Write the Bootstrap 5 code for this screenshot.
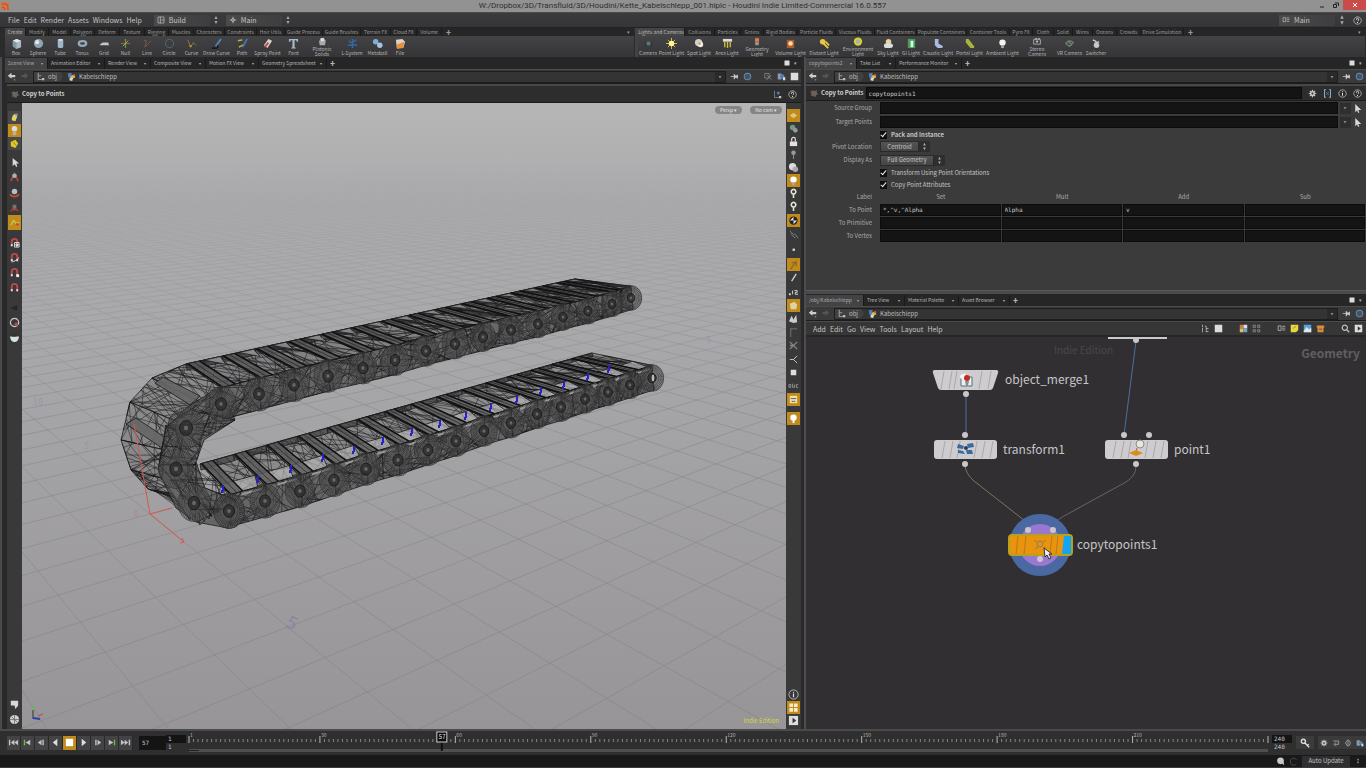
<!DOCTYPE html>
<html lang="en">
<head>
<meta charset="utf-8">
<meta name="viewport" content="width=device-width, initial-scale=1">
<title>Kette_Kabelschlepp_001.hiplc - Houdini Indie</title>
<link href="https://cdn.jsdelivr.net/npm/bootstrap@5.3.0/dist/css/bootstrap.min.css" rel="stylesheet">
<style>
:root{--panel:#39383a;--dark:#29292a;--line:#1d1d1e;--txt:#c4c4c5;--amber:#c08a1c}
body{font-family:"Noto Sans CJK SC","Open Sans",sans-serif;font-size:6px;line-height:8px;color:var(--txt);background:var(--dark);overflow:hidden}
button,select,input{font:inherit;color:inherit;border:0;background:none;padding:0;margin:0;border-radius:0;min-width:0}
button{line-height:inherit;display:inline-flex;align-items:center;justify-content:center}
svg{display:block;flex:none}
a{color:inherit;text-decoration:none}
select{appearance:none;outline:0}
.titlebar{height:12px;background:#929292;color:#2e2e2e;font:8px/12px Roboto,sans-serif}
.titlebar .cls{width:23px;height:10px;background:#cb4a4a;color:#fff}
.titlebar .wbtn{width:14px;height:10px}
.menubar{height:15px;background:linear-gradient(#3b3b3d,#353436);font-size:7px;line-height:14px;border-top:1px solid #4a4a4b;padding-left:8px}
.menubar a,.netmenu a{margin-right:4px}
.desk{width:56px;height:11px;background:linear-gradient(90deg,#4a4a4b,#3e3e40);padding-left:3px}
.desk select{font-size:7px;line-height:10px;height:11px;flex:1;width:30px}
.shelves{display:grid;grid-template-columns:635fr 731fr;background:#222;padding-top:1px;height:30px}
.shelf{border-left:5px solid #2b2b2c;border-right:1px solid #2b2b2c}
.shelf + .shelf{border-left:3px solid #434344}
.stabs{height:8px;background:#262627;color:#9b9b9c}
.stabs button{height:8px;font-size:5px;line-height:8px;border-right:1px solid #1a1a1b;white-space:nowrap;flex:none}
.stabs button.active{background:#454546;color:#bbb}
.stools{height:21px;background:linear-gradient(#434345,#353436)}
.stools button{flex:none;flex-direction:column;justify-content:flex-start;padding-top:2px;font-size:5px;line-height:5px;color:#b4b4b5;white-space:nowrap;height:21px}
.stools button svg{margin-bottom:1px}
.stools button.two svg{width:10px;height:9px;margin-bottom:0}
.stools button.two{padding-top:1px}
.workspace{display:grid;grid-template-columns:804fr 562fr;flex:1;min-height:0}
.pane{min-width:0;border-left:2px solid #4a4a4c;padding-left:5px;padding-right:3px;background:var(--dark)}
.pane .ptabs,.pane .pathbar{margin-left:-2px}
.pane .opbar{height:19px;padding-left:4px}
.rightcol{border-left:2px solid #4d4d4f;min-width:0}
.ptabs{height:12px;background:#262627;color:#b4b4b5}
.ptabs button{flex:none;height:11px;justify-content:space-between;padding:0 4px 0 3px;border-right:1px solid #19191a;white-space:nowrap;font-size:5px}
.ptabs button.active{background:#434345;color:#a8a8a9}
.ptabs button i{font-size:4px;font-style:normal}
.pathbar{height:15px;background:#3a3a3b;border-top:1px solid #4b4b4c;border-bottom:1px solid #1b1b1c;padding:0 2px}
.crumbs{flex:1;height:12px;background:#343435;border:1px solid #1d1d1e;color:#bdbdbe}
.crumbs .seg{background:#414142;height:10px;padding:0 6px 0 2px;clip-path:polygon(0 0,90% 0,100% 50%,90% 100%,0 100%)}
.crumbs a{gap:3px}
.crumbs .drop{width:10px;height:10px;background:#2a2a2b}
.opbar{height:17px;background:#2d2d2e;border-top:2px solid #484849;border-bottom:1px solid #1b1b1c;gap:2px}
.optitle{font-weight:700;color:#d0d0d1}
.tbar{width:15px;background:#39393a;padding-top:6px;padding-bottom:2px}
.tbar button{width:13px;height:13px;flex:none}
.tbar.lt{padding-top:8px}
.tbar.lt button{height:15px}
.tbar.lt .set button{height:13px;background:#48484a}
.tbar button.on,.tbar.lt .set button.on{background:var(--amber)}
.view{flex:1;min-width:0;overflow:hidden;background:#a3a2a4}
.view > svg{width:100%;height:100%}
.campill{top:3px;right:4px;font-size:5px}
.campill button{height:8px;border-radius:4px;background:#858587;color:#e2e2e3;padding:0 5px;line-height:8px}
.indie{right:7px;bottom:4px;color:#d6d63a}
.params{background:#3b3b3c}
.prow{display:grid;grid-template-columns:66px 1fr;column-gap:8px;height:14px;align-items:center;padding-right:3px}
.prow.h13{height:13px}.prow.h11{height:11px}.prow.h12{height:12px}
.prow > label:first-child,.prow > span:first-child{text-align:right;color:#a9a9aa}
.inp{background:#141415;height:12px;border:1px solid #0c0c0d;width:100%;font-family:"DejaVu Sans Mono",monospace;color:#c9c9ca;padding:0 2px;outline:0}
.pick{gap:2px}
.cbox{appearance:none;width:7px;height:8px;background:#0f0f10;position:relative}
.cbox:checked::after{content:"";position:absolute;left:2px;top:0;width:3px;height:6px;border:solid #eee;border-width:0 1px 1px 0;rotate:40deg}
.pmenu{background:linear-gradient(#545455,#464647);height:11px;border:1px solid #2a2a2b;text-align:center;padding:0 6px}
.updn{width:11px;height:11px;background:#2e2e2f}
.ptable{width:100%;table-layout:fixed;border-collapse:collapse;margin:0}
.ptable th{font-weight:400;color:#a9a9aa;padding:0;text-align:center;height:12px}
.ptable thead th{height:13px}
.ptable th:first-child{width:74px;text-align:right;padding-right:8px}
.ptable td{padding:0 1px 0 0;height:13px}
.ptable .inp{display:block}
.split{height:4px;background:#4a4a4b;border-top:1px solid #5a5a5b;flex:none}
.netmenu{height:16px;background:#363637;border-top:1px solid #4b4b4c;border-bottom:2px solid #262627;font-size:7px;line-height:12px;padding:0 3px 0 7px;flex:none}
.net{flex:1;min-height:0;background:#322f32;overflow:hidden}
.net > svg{width:100%;height:100%}
.net text{font-size:12px;fill:#c6c5c6}
.geo{right:6px;top:9px;font:700 12px/14px "Noto Sans CJK SC",sans-serif;color:#605e60}
.timeline{height:26px;background:#2f2f30;border-top:2px solid #4a4a4b;flex:none;padding-left:7px;padding-bottom:1px}
.play{margin-right:6px}
.play button{width:14px;height:14px;background:#434345;border-right:1px solid #29292a}
.play button.on{background:var(--amber)}
.numbox{background:#141415;height:14px;width:27px;font-family:"DejaVu Sans Mono",monospace;padding-left:3px;outline:0}
.rng{width:20px;font-family:"DejaVu Sans Mono",monospace}
.rng input{display:block;width:100%;height:8px;background:#141415;padding-left:2px}
.rng input + input{background:none}
.ruler{flex:1;min-width:0;height:22px;margin:0 4px 0 3px}
.ruler svg{width:100%;height:100%;overflow:visible}
.ruler text{font-size:5px;fill:#b5b5b6}
.statusbar{height:13px;background:#19191a;flex:none;border-bottom:1px solid #3a3a3b}
.statusbar select{background:#2f2f31;width:48px;height:11px;text-align:center}
.tools2 button{width:12px;height:13px;background:#3b3b3c}
</style>
</head>
<body>
<div class="vh-100 d-flex flex-column">
  <header class="titlebar d-flex align-items-center justify-content-between flex-shrink-0">
    <svg width="50" height="12" viewBox="0 0 50 12"><rect x="1" y="2" width="8" height="8" fill="#d9733f"/><path d="M2 4h3q3 0 3 3v3M2 7q3 0 3 3" stroke="#a8583a" fill="none"/></svg>
    <span>W:/Dropbox/3D/Transfluid/3D/Houdini/Kette_Kabelschlepp_001.hiplc - Houdini Indie Limited-Commercial 16.0.557</span>
    <div class="d-flex align-items-start h-100">
      <button class="wbtn" aria-label="Minimize"><svg width="6" height="6"><path d="M1 5h4" stroke="#222"/></svg></button>
      <button class="wbtn" aria-label="Restore"><svg width="6" height="6"><path d="M.5 2.500h3v3h-3zM2 1h3.500v3" stroke="#222" fill="none"/></svg></button>
      <button class="cls me-0" aria-label="Close"><svg width="6" height="6"><path d="M1 1l4 4M5 1L1 5" stroke="#fff"/></svg></button>
    </div>
  </header>

  <nav class="menubar d-flex align-items-center flex-shrink-0">
    <a href="#">File</a><a href="#">Edit</a><a href="#">Render</a><a href="#">Assets</a><a href="#">Windows</a><a href="#">Help</a>
    <div class="desk d-flex align-items-center gap-1 ms-2"><span data-ic="layout" data-s="8"></span><select aria-label="Desktop"><option>Build</option></select></div><span data-ic="updn" data-s="12"></span>
    <div class="desk d-flex align-items-center gap-1 ms-1"><span data-ic="target" data-s="8"></span><select aria-label="Radial menu"><option>Main</option></select></div><span data-ic="updn" data-s="12"></span>
    <div class="desk d-flex align-items-center gap-1 ms-auto"><span data-ic="frames" data-s="8"></span><select aria-label="Take"><option>Main</option></select></div><span data-ic="updn" data-s="14"></span>
    <button class="mx-1" aria-label="Help"><span data-ic="help" data-s="9"></span></button>
  </nav>

  <div class="shelves flex-shrink-0">
    <section class="shelf"><div class="stabs d-flex" id="tabsA"></div><div class="stools d-flex" id="toolsA"></div></section>
    <section class="shelf"><div class="stabs d-flex" id="tabsB"></div><div class="stools d-flex" id="toolsB"></div></section>
  </div>

  <main class="workspace">
    <section class="pane d-flex flex-column">
      <div class="ptabs d-flex align-items-center" data-tabs="Scene View:43,Animation Editor:57,Render View:46,Composite View:55,Motion FX View:53,Geometry Spreadsheet:68"></div>
      <div class="pathbar d-flex align-items-center gap-1">
        <button aria-label="Back"><span data-ic="back" data-s="9"></span></button><button aria-label="Forward"><span data-ic="fwd" data-s="9"></span></button>
        <div class="crumbs d-flex align-items-center"><a href="#" class="seg d-flex align-items-center"><span data-ic="obj" data-s="9"></span>obj</a><a href="#" class="d-flex align-items-center ms-1"><span data-ic="geo" data-s="9"></span>Kabelschlepp</a><button class="drop ms-auto" aria-label="Path list"><span data-ic="caret" data-s="6"></span></button></div>
        <button aria-label="Pin"><span data-ic="pin" data-s="9"></span></button><button aria-label="Link"><span data-ic="globe" data-s="9"></span></button>
        <button class="ms-2" aria-label="Ghost"><span data-ic="ghost" data-s="9"></span></button><button aria-label="Snapshot"><span data-ic="shot" data-s="9"></span></button><button aria-label="Layout"><span data-ic="white" data-s="9"></span></button>
      </div>
      <div class="opbar d-flex align-items-center pe-1"><span data-ic="copyop" data-s="9"></span><span class="optitle">Copy to Points</span><button class="ms-auto" aria-label="Handles"><span data-ic="handle" data-s="9"></span></button><button class="ms-1" aria-label="Help"><span data-ic="help" data-s="9"></span></button></div>
      <div class="d-flex flex-grow-1" style="min-height:0">
        <div class="tbar lt d-flex flex-column align-items-center" id="barL"></div>
        <div class="view position-relative">
          <svg id="scene" viewBox="22 103 764 626" preserveAspectRatio="xMinYMin slice"></svg>
          <div class="campill position-absolute d-flex gap-2"><button>Persp ▾</button><button>No cam ▾</button></div>
          <span class="indie position-absolute">Indie Edition</span>
        </div>
        <div class="tbar d-flex flex-column align-items-center" id="barR"></div>
      </div>
    </section>

    <div class="rightcol d-flex flex-column">
      <section class="params d-flex flex-column">
        <div class="ptabs d-flex align-items-center" data-tabs="copytopoints2:51,Take List:39,Performance Monitor:66"></div>
        <div class="pathbar d-flex align-items-center gap-1">
          <button aria-label="Back"><span data-ic="back" data-s="9"></span></button><button aria-label="Forward"><span data-ic="fwd" data-s="9"></span></button>
          <div class="crumbs d-flex align-items-center"><a href="#" class="seg d-flex align-items-center"><span data-ic="obj" data-s="9"></span>obj</a><a href="#" class="d-flex align-items-center ms-1"><span data-ic="geo" data-s="9"></span>Kabelschlepp</a><button class="drop ms-auto" aria-label="Path list"><span data-ic="caret" data-s="6"></span></button></div>
          <button aria-label="Pin"><span data-ic="pin" data-s="9"></span></button><button aria-label="Link"><span data-ic="globe" data-s="9"></span></button>
        </div>
        <div class="opbar d-flex align-items-center ps-1 pe-1"><span data-ic="copyop" data-s="9"></span><label for="opname" class="optitle">Copy to Points</label><input id="opname" class="inp flex-grow-1 w-auto" value="copytopoints1"><button class="ms-1" aria-label="Settings"><span data-ic="gear" data-s="9"></span></button><button class="ms-1" aria-label="Brackets"><span data-ic="brk" data-s="9"></span></button><button class="ms-1" aria-label="Info"><span data-ic="info" data-s="9"></span></button><button class="ms-1" aria-label="Help"><span data-ic="help" data-s="9"></span></button></div>
        <div class="prow"><label for="sg">Source Group</label><div class="d-flex align-items-center pick"><input id="sg" class="inp"><button class="updn" aria-label="Groups"><span data-ic="caret" data-s="6"></span></button><button class="updn bg-transparent" aria-label="Pick"><span data-ic="cursor" data-s="9"></span></button></div></div>
        <div class="prow"><label for="tp">Target Points</label><div class="d-flex align-items-center pick"><input id="tp" class="inp"><button class="updn" aria-label="Groups"><span data-ic="caret" data-s="6"></span></button><button class="updn bg-transparent" aria-label="Pick"><span data-ic="cursor" data-s="9"></span></button></div></div>
        <div class="prow h11"><span></span><div class="d-flex align-items-center gap-1"><input type="checkbox" class="cbox" id="pk" checked><label for="pk" class="fw-bold">Pack and Instance</label></div></div>
        <div class="prow h13"><label for="pl">Pivot Location</label><div class="d-flex"><select id="pl" class="pmenu"><option>Centroid</option></select><span class="updn" data-ic="updn" data-s="11"></span></div></div>
        <div class="prow"><label for="da">Display As</label><div class="d-flex"><select id="da" class="pmenu"><option>Full Geometry</option></select><span class="updn" data-ic="updn" data-s="11"></span></div></div>
        <div class="prow h12"><span></span><div class="d-flex align-items-center gap-1"><input type="checkbox" class="cbox" id="tu" checked><label for="tu">Transform Using Point Orientations</label></div></div>
        <div class="prow h11"><span></span><div class="d-flex align-items-center gap-1"><input type="checkbox" class="cbox" id="ca" checked><label for="ca">Copy Point Attributes</label></div></div>
        <table class="ptable">
          <thead><tr><th>Label</th><th>Set</th><th>Mult</th><th>Add</th><th>Sub</th></tr></thead>
          <tbody>
            <tr><th>To Point</th><td><input class="inp" aria-label="Point set" value="*,^v,^Alpha"></td><td><input class="inp" aria-label="Point mult" value="Alpha"></td><td><input class="inp" aria-label="Point add" value="v"></td><td><input class="inp" aria-label="Point sub"></td></tr>
            <tr><th>To Primitive</th><td><input class="inp" aria-label="Primitive set"></td><td><input class="inp" aria-label="Primitive mult"></td><td><input class="inp" aria-label="Primitive add"></td><td><input class="inp" aria-label="Primitive sub"></td></tr>
            <tr><th>To Vertex</th><td><input class="inp" aria-label="Vertex set"></td><td><input class="inp" aria-label="Vertex mult"></td><td><input class="inp" aria-label="Vertex add"></td><td><input class="inp" aria-label="Vertex sub"></td></tr>
          </tbody>
        </table>
        <div class="pb-5"></div>
      </section>
      <div class="split"></div>
      <section class="d-flex flex-column flex-grow-1" style="min-height:0">
        <div class="ptabs d-flex align-items-center flex-shrink-0" data-tabs="/obj/Kabelschlepp:58,Tree View:41,Material Palette:54,Asset Browser:51"></div>
        <div class="pathbar d-flex align-items-center gap-1 flex-shrink-0">
          <button aria-label="Back"><span data-ic="back" data-s="9"></span></button><button aria-label="Forward"><span data-ic="fwd" data-s="9"></span></button>
          <div class="crumbs d-flex align-items-center"><a href="#" class="seg d-flex align-items-center"><span data-ic="obj" data-s="9"></span>obj</a><a href="#" class="d-flex align-items-center ms-1"><span data-ic="geo" data-s="9"></span>Kabelschlepp</a><button class="drop ms-auto" aria-label="Path list"><span data-ic="caret" data-s="6"></span></button></div>
          <button aria-label="Pin"><span data-ic="pin" data-s="9"></span></button><button aria-label="Link"><span data-ic="globe" data-s="9"></span></button>
        </div>
        <nav class="netmenu d-flex align-items-center">
          <a href="#">Add</a><a href="#">Edit</a><a href="#">Go</a><a href="#">View</a><a href="#">Tools</a><a href="#">Layout</a><a href="#">Help</a>
          <div class="ms-auto d-flex gap-3"><div class="d-flex gap-1"><button aria-label="Tree"><span data-ic="tree" data-s="9"></span></button><button aria-label="List"><span data-ic="white" data-s="9"></span></button></div>
          <div class="d-flex gap-1"><button aria-label="Colors"><span data-ic="palette" data-s="9"></span></button><button aria-label="Grid"><span data-ic="cells" data-s="9"></span></button></div>
          <div class="d-flex gap-1"><button aria-label="Frames"><span data-ic="frames" data-s="9"></span></button><button aria-label="Sticky note"><span data-ic="note" data-s="9"></span></button><button aria-label="Image"><span data-ic="image" data-s="9"></span></button><button aria-label="Box"><span data-ic="crate" data-s="9"></span></button></div>
          <div class="d-flex gap-1"><button aria-label="Search"><span data-ic="search" data-s="9"></span></button><button aria-label="Display"><span data-ic="disp" data-s="9"></span></button></div></div>
        </nav>
        <div class="net position-relative">
          <svg>
            <defs><g id="stripes" stroke="#a9a7a9" stroke-width="1"><path d="M11 1l-3 17M19 1l-3 17M26 1l-3 17M43 1l-3 17M51 1l-3 17M59 1l-3 17"/></g></defs>
            <text x="248" y="17" style="font-size:10px;fill:#4a474a">Indie Edition</text>
            <g fill="none" stroke="#4c6f98"><path d="M330 4L318 98M160 58V98"/></g>
            <path d="M159 129Q160 137 168 144L214 180Q222 186 222 193" fill="none" stroke="#747a60"/>
            <path d="M330 129Q330 139 320 145L258 179Q247 185 247 193" fill="none" stroke="#6b6560"/>
            <path d="M302 0h59v2h-59z" fill="#cbc9cb"/>
            <path d="M129 33h61q3 0 2 3l-5 15q-1 2-3 2h-49q-2 0-3-2l-5-15q-1-3 2-3z" fill="#cfcccf"/>
            <path d="M138 34l-3 18M146 34l-3 18M151 34l-3 18M176 34l-3 18M185 34l-3 18" stroke="#a9a7a9"/>
            <path d="M155 40h11v9h-11z" fill="#eee" stroke="#4d7280"/><path d="M154 41q0-5 6-4l-2 6z" fill="#f4f4f4"/><circle cx="161" cy="41" r="3" fill="#c32a22"/><path d="M159 44h4l-1 5h-2z" fill="#7f8f94"/>
            <rect x="128" y="103" width="63" height="19" rx="3" fill="#cfcccf"/><use href="#stripes" x="128" y="103"/>
            <path d="M152 107l6 2-1 3-6-1zM161 107l6-1 1 4-6 1zM152 113l5 1 2 3-7-1zM160 113l6 0 1 4-6 0z" fill="#3c6a9c"/><circle cx="160" cy="111" r="2" fill="#26405c"/>
            <rect x="299" y="103" width="63" height="19" rx="3" fill="#cfcccf"/><use href="#stripes" x="299" y="103"/>
            <circle cx="334" cy="107" r="4" fill="#e7e7df" stroke="#8d8d86"/><path d="M331 111l-1 4" stroke="#8a7430"/><path d="M323 116l7-3 7 3-7 3z" fill="#e08a1c"/>
            <circle cx="234" cy="208" r="31" fill="#4a69a3"/><circle cx="234" cy="208" r="21" fill="#9a78cf"/>
            <g fill="#c9c7c9"><circle cx="330" cy="3" r="3"/><circle cx="160" cy="57" r="3"/><circle cx="159" cy="98" r="3"/><circle cx="159" cy="127" r="3"/><circle cx="318" cy="98" r="3"/><circle cx="343" cy="98" r="3"/><circle cx="330" cy="127" r="3"/><circle cx="222" cy="193" r="3"/><circle cx="247" cy="193" r="3"/><circle cx="234" cy="222" r="3"/></g>
            <rect x="203" y="198" width="63" height="20" rx="3" fill="#e8940f" stroke="#b8a21c" stroke-width="2"/>
            <path d="M258 199h7v18h-9z" fill="#12a5f2"/><path d="M212 199l-2 18M220 199l-2 18M246 199l-2 18M252 199l-2 18" stroke="#b87a1c"/>
            <g fill="#cf9640" stroke="#a87c30"><circle cx="234" cy="207" r="3"/><path d="M228 203l3 2M240 203l-3 2M229 212l3-2M240 211l-3-1"/></g>
            <path d="M238 211l1 9 2-2 2 4 2-1-2-4h3z" fill="#eee" stroke="#333"/>
            <text x="199" y="47">object_merge1</text><text x="197" y="117">transform1</text><text x="368" y="117">point1</text><text x="271" y="212">copytopoints1</text>
          </svg>
          <span class="geo position-absolute">Geometry</span>
        </div>
      </section>
    </div>
  </main>

  <footer class="timeline d-flex align-items-center">
    <div class="play d-flex" id="play"></div>
    <input class="numbox" aria-label="Current frame" value="57">
    <div class="rng"><input aria-label="Range start" value="1"><input aria-label="Global start" value="1"></div>
    <div class="ruler"><svg id="ruler"></svg></div>
    <div class="rng"><input aria-label="Range end" value="240"><input aria-label="Global end" value="240"></div>
    <div class="tools2 d-flex align-items-center ms-1"><button class="me-1 px-1" style="width:auto" aria-label="Key"><span data-ic="key" data-s="10"></span></button><button aria-label="Settings"><span data-ic="gear" data-s="8"></span></button><button aria-label="Loop"><span data-ic="loop" data-s="8"></span></button><button aria-label="Audio"><span data-ic="audio" data-s="8"></span></button><button aria-label="Realtime"><span data-ic="shot" data-s="8"></span></button></div>
  </footer>
  <div class="statusbar d-flex align-items-center justify-content-end gap-1 pe-1"><button aria-label="Chat"><span data-ic="chat" data-s="9"></span></button><button aria-label="Refresh"><span data-ic="refresh" data-s="9"></span></button><select aria-label="Update mode"><option>Auto Update</option></select><span data-ic="updn" data-s="8"></span></div>
</div>
<script src="https://cdn.jsdelivr.net/npm/bootstrap@5.3.0/dist/js/bootstrap.bundle.min.js"></script>
<script>
// Icon drawings, each on a 12 x 12 grid
const P = (d, c = '#c4c4c5', w = 1) => `<path d="${d}" fill="none" stroke="${c}" stroke-width="${w}"/>`;
const F = (d, c = '#c4c4c5') => `<path d="${d}" fill="${c}"/>`;
const C = (x, y, r, c = '#c4c4c5') => `<circle cx="${x}" cy="${y}" r="${r}" fill="${c}"/>`;
const magnet = P('M3 9V5a3 3 0 0 1 6 0v4', '#c0484a', 2) + F('M2 8h2v2H2zM8 8h2v2H8z', '#eee');
const bulb = c => C(6, 5, 3.5, c) + F('M4.500 8h3v3h-3z', '#aaa');
const I = {
  layout: P('M1.500 1.500h9v9h-9zM5 1v10M5 6h6'), target: P('M6 1v10M1 6h10') + P('M6 3.500a2.500 2.500 0 1 0 .1 0'),
  frames: P('M1.500 2.500h4v6h-4zM7 3h4M7 5.500h4M7 8h4'), updn: F('M4.500 5L6 2l1.500 3zM4.500 7L6 10l1.500-3z', '#aaa'),
  help: P('M6 1a5 5 0 1 0 .1 0') + P('M4.500 5q0-2 1.500-2t1.500 1.500T6 7M6 8v1.500', '#ddd', 1.3), info: P('M6 1a5 5 0 1 0 .1 0') + P('M6 5v4M6 3v1', '#ddd', 1.3),
  back: F('M1 5l5-4v3h5v3H6v2z', '#ccc') + F('M9 10h2v1H9z'), fwd: F('M11 5L6 1v3H2v3h4v2z', '#555'), caret: F('M3 4h6L6 9z', '#888'),
  obj: P('M3 1v9h8M3 5h4', '#999', 1.5) + F('M8 8h3v3H8z', '#bbb'), geo: F('M1 2l5-1v6l-4 1z', '#4d7fc0') + F('M5 5l5-2 1 4-5 3z', '#e3b63c') + F('M4 7l4 1-1 4-4-1z', '#d9d9d9') + F('M8 3h3v2H8z', '#c94b3a'),
  pin: F('M1 5.500h4v-3h1l1 2h2v-1h1.500v5H9v-1H7l-1 2H5v-3H1z', '#ccc'), globe: C(6, 6, 5, '#7089a4') + C(6, 6, 3.8, '#3d5674'),
  ghost: P('M1 2h6v6H1zM4 4l6 6M10 4L3 11', '#888'), shot: F('M1 2h5v8H1z', '#8c9bb0') + C(7, 6, 3, '#4d7eb8') + F('M8 7h3v4H8z', '#ddd'), white: F('M1 1h10v10H1z', '#dcdcdc'),
  copyop: F('M3 1l3 2 3-2 0 4 2 2-3 1-1 3-3-2-3 0 1-3-2-3h3z', '#6d625c'), handle: P('M2 1v9h6', '#88a') + C(7, 4, 2, '#4d7eb8') + F('M8 8h3v3H8z'),
  gear: P('M6 1v10M1 6h10M2.500 2.500l7 7M9.500 2.500l-7 7', '#c4c4c5', 1.6) + C(6, 6, 3.4) + C(6, 6, 1.3, '#333'), brk: P('M4 1H2v10h2M8 1h2v10H8', '#8fa6bd', 1.4) + P('M4 4l4 4M8 4L4 8', '#5d81aa'),
  cursor: F('M3 0v11l2.500-2.500L7 12l1.500-1L7 8h4z', '#d8d8d8'), tree: P('M2 1v3M2 5v6M5 3h2v8M7 6h3M7 10h3'), palette: F('M1 1h5v5H1z', '#d0774b') + F('M6 1h5v5H6z', '#ddd') + F('M1 6h5v5H1z', '#d8c25a') + F('M6 6h5v5H6z', '#71a0cc'),
  cells: P('M1.500 1.500h3v3h-3zM7.500 1.500h3v3h-3zM1.500 7.500h3v3h-3zM7.500 7.500h3v3h-3z', '#999'), note: F('M1 1h10v7l-3 3H1z', '#e6d940') + P('M4 6l4-3', '#775'), image: F('M1 1h10v10H1z', '#58a4d6') + F('M1 9l4-5 3 3 3-2v6H1z', '#dfe6ea'), crate: F('M1 2h10v3H1zM2 5h8v6H2z', '#d98e35') + F('M4 6h4v2H4z', '#865'),
  search: P('M5 1.500a3.500 3.500 0 1 0 .1 0M7.500 7.500L11 11', '#ccc', 1.5), disp: F('M1 1h10v10H1z', '#ddd') + F('M5 3l4 3-4 3z', '#333'), key: P('M4 1.500a2.500 2.500 0 1 0 .1 0M6 6l5 5M9 9l1.500-1.500', '#ddd', 1.7),
  loop: P('M2 3h8v5H4M6 5L3 8l3 3'), audio: P('M6 1L2 6l4 5M8 2q3 4 0 8M6 1v10'), chat: C(6, 5, 4.500, '#c9c9ca') + F('M7 8l4 3-1-5z'), refresh: P('M10 4a4.500 4.500 0 0 0-8 0v4M2 8a4.500 4.500 0 0 0 8 1', '#555'),
  // shelf tools
  box: F('M2 3l4-2 5 2v7l-5 2-4-3z', '#a9b9c0') + F('M2 3l4 2 5-2-5-2z', '#dfe9ec') + F('M2 3l4 2v7l-4-3z', '#8298a2'), sphere: C(6, 6, 5, '#8fa6b0') + C(4.500, 4.500, 2.300, '#dfe8ea'), tube: F('M3 2q3-2 6 0v8q-3 2-6 0z', '#9fb6c8') + F('M3 2q3 2 6 0-3-2-6 0', '#e3ecf0'),
  torus: `<ellipse cx="6" cy="6" rx="4" ry="2.500" fill="none" stroke="#92aabb" stroke-width="2.500"/>`, gridp: F('M1 7l3-2h6l1 3H1z', '#c2c6c8'), nul: P('M6 1v10', '#4c9a4a', 1.5) + P('M1 6h10', '#c2553e') + P('M3 9l6-6', '#c9a23a'), linei: P('M2 3h3L3 10l7-7', '#7d5a52'), circ: P('M6 1.500a4.500 4.500 0 1 0 .1 0', '#5b7080'),
  curve: P('M2 2l3 8 3-5 3 3', '#9a7b3a') + C(5, 9, 1.2, '#c9a23a'), draw: P('M1 11h5q2 0 1-3', '#111', 1.5) + P('M5 9l6-8', '#4a85bb', 2), path: P('M1 3l5-1M2 10l6-3', '#c9b33a', 1.5) + P('M6 10l5-9', '#3f78b5', 2), spray: F('M2 8l5-7 4 2-5 8z', '#d9d2d0') + P('M3 10l4-5', '#c0483e', 2), fonti: F('M1 1h10v3H9.500L9 2.500H7.200V10l1.300.5v1h-5v-1L4.800 10V2.500H3L2.500 4H1z', '#a6bac6'),
  plat: F('M2 6l2-4 4-1 3 4-1 6H3z', '#a9a9aa') + F('M4 2l4-1 1 4-4 1z', '#ddd'), lsys: P('M6 11V5M6 6L2 3M6 5l4-3M6 7l5 1M6 8L1 8M6 4V1', '#2f6aa8', 1.600), meta: C(4, 4, 3, '#84abd6') + C(8.500, 8, 3, '#a5c3e3'), file: F('M1 2l7-1 3 3-2 7H2z', '#ddd3c8') + F('M2 7l8-3-1 7-7 1z', '#e5923c'),
  cam: F('M2 4h8v5H2z', '#2e3438') + C(6, 6, 2.500, '#55757a'), sun: P('M6 0v12M0 6h12M2 2l8 8M10 2l-8 8', '#d6c54c') + C(6, 6, 3, '#fff3a0'), spot: C(5, 5, 4, '#cfcfcf') + C(7, 7, 3, '#eee') + C(6, 6, 1.500, '#c9a23a'), area: F('M1 1h10v3H1z', '#ddd') + P('M3 4v6M6 4v7M9 4v6', '#d6b93c', 1.500),
  geol: C(6, 4, 3, '#d87a4a') + F('M3 7h6l-1 4H4z', '#9a9a88'), vol: F('M2 2h8v9H2z', '#b45a32') + C(6, 6, 2.500, '#ffe9a0'), dist: C(4, 4, 3, '#e8c93c') + P('M5 6l5 5M7 4l4 4', '#e8c93c', 2), env: C(6, 6, 5.500, '#e0d035') + C(6, 6, 3, '#9fb6a0'), sky: C(6, 4, 3, '#e6d58a') + F('M1 9q0-4 4-3 5-1 6 2 0 3-3 3H3q-2 0-2-2', '#d8dde2'), gi: F('M2 1h8v10H2z', '#4e9a58') + F('M5 3h3v7H5z', '#cfe'), caus: F('M2 1h4v5l5 3-1 2H5L2 8z', '#a9b9e0'), portal: F('M2 1h3l6 8v2H7L2 5z', '#a9b33a'),
  bulbw: bulb('#f1f4ef'), stereo: P('M1.500 3.500h9v6h-9zM3 2h3M7 2h3') + C(6, 6, 1.500), vr: P('M2 6q4-5 8-1L6 9zM4 3l5 5', '#6d7d72', 1.500), sw: P('M2 2l4 2M4 6l5-2', '#ccc', 1.500) + C(6, 8, 3, '#c9c9ca'),
  // side bars
  lamp: F('M3 9q0-6 4-7l2 3-2 5z', '#e3d463') + C(8, 3, 1.500, '#999'), hand: C(6, 4, 3, '#ddd') + F('M4 7h4v4H4z', '#b9b29a'), cube: F('M2 4l5-2 3 4-3 5-5-2z', '#e0c822') + P('M4 4l4 4', '#9a860c'), arrow: F('M4 1v9l2-2 2 3 1-1-1-3h3z', '#d8d8d8'), rmove: P('M2 10l4-8 4 8', '#b2423a', 2) + C(6, 4, 2.500, '#a9b1b8'), rrot: P('M1 8q5 5 10 0', '#c2502e', 2) + C(6, 5, 3, '#b7bdc2'), rscale: F('M4 3h4v6H4z', '#7d7270') + P('M2 10l3-3M10 10L7 7', '#a8352e', 2), pose: P('M2 9l3-5 3 3 3-1', '#b7d04a', 1.500) + C(9, 8, 1.500, '#c94b3a'),
  mgrid: magnet + P('M6 6h5v5H6zM8.500 6v5M6 8.500h5', '#ddd'), mcurve: magnet + P('M3 11q5-1 8-5', '#ddd'), mpoint: magnet + F('M8 8h3v3H8z', '#eee'), magnet, cone: F('M1 7l8-4v6z', '#23272b'), dial: P('M6 1.500a4.500 4.500 0 1 0 .1 0', '#ccc', 1.200) + C(8, 8, 2, '#c0484a'), dish: F('M1 5h10q-1 6-5 6T1 5z', '#d8e2e2') + F('M3 2h5v3H3z', '#333'),
  flag: F('M2 2h8v5l-3 4-1-4H2z', '#d8d8d8'), ball: C(6, 6, 5, '#d0d0d0') + P('M1 6h10M6 1v10M3 3l6 6', '#666', .8), lines: F('M2 6l4-3 4 3-4 3z', '#e0c47a'), ghosts: C(5, 5, 3, '#6f9a78') + C(8, 8, 2.500, '#999'), lock: F('M2 6h8v5H2z', '#e2e2e2') + P('M4 6V3.500a2 2 0 0 1 4 0V6', '#e2e2e2', 1.300), pinp: C(6, 4, 2.500, '#999') + P('M6 5v6', '#999'), moon: C(5, 5, 4, '#ddd') + C(8, 8, 3, '#aaa'), bulby: bulb('#fff'), loc: P('M6 1.500a2.500 2.500 0 1 0 .1 0M6 6v5', '#e5e5d8', 1.700), mat: C(6, 6, 4.500, '#222') + F('M2 6h4V2M6 10V6h4z', '#ddd'), link: P('M2 2l4 4M7 5l4 5M3 5l5 5', '#888'), dot: F('M5 5h2.500v2.500H5z', '#ddd'), norm: P('M3 11l6-9M4 4h5v4', '#8a6a20', 1.500), norm2: P('M4 10l5-8', '#ccc', 1.500), num: F('M1 8h2v2H1z', '#ddd') + P('M5 5v4M7 5h3v2H8v2h3', '#ddd'), prim: F('M2 4l5-2 3 3-1 5H3z', '#ddd2a4'), tris: F('M1 9l3-6 2 4 3-5 1 8-4 1z', '#ccc'), corner: P('M3 1v10M3 2h7', '#777'), cross: P('M2 2l8 8M10 2l-8 8M2 6h3', '#888', 1.400), fork: P('M2 6h4l4-4M6 6l4 4', '#ccc'), sq: F('M3 3h6v6H3z', '#ddd'), abc: P('M1 5h2v3H1zM5 4v4h2V5M11 5H9v3h2', '#aaa', .8), disk: F('M2 2h8v8H2z', '#efe0b0') + P('M3 5h6M4 8h4', '#555'), pinw: C(6, 5, 3.500, '#fff') + F('M5 7h2v4H5z', '#fff'), four: F('M1.500 1.500h4v4h-4zM6.500 1.500h4v4h-4zM1.500 6.500h4v4h-4zM6.500 6.500h4v4h-4z', '#f6edc8'),
  // playback
  p1: F('M1 3h1.500v6H1zM3 6l4-3v6zM7 6l4-3v6z'), p2: F('M2 3h1.500v6H2z', '#6fbf3c') + F('M4 6l5-3v6z'), p3: F('M2 6l4-3v6zM7 3h1.500v6H7z'), p4: F('M3 6l5-4v8z', '#ddd'), p5: F('M2 2h8v8H2z', '#fff'), p6: F('M9 6L4 2v8z', '#ddd'), p7: F('M10 6L6 3v6zM3.500 3H5v6H3.500z'), p8: F('M8 6L3 3v6z') + F('M8.500 3H10v6H8.500z', '#6fbf3c'), p9: F('M9.500 3H11v6H9.500zM9 6L5 3v6zM5 6L1 3v6z')
};
const svg = (n, s) => `<svg width="${s}" height="${s}" viewBox="0 0 12 12">${I[n]}</svg>`;
const $ = id => document.getElementById(id);
document.querySelectorAll('[data-ic]').forEach(e => e.innerHTML = svg(e.dataset.ic, e.dataset.s));

// Shelf tabs and tools: label, cell width, icon
const tabs = (id, txt) => $(id).innerHTML = txt.split(',').map((t, i) => { const [n, w] = t.split(':'); return `<button class="${i ? '' : 'active'}" style="width:${w}px">${n}</button>`; }).join('') + '<button class="border-0 px-1">✚</button><button class="border-0 ms-auto px-1">▾</button>';
tabs('tabsA', 'Create:21,Modify:23,Model:22,Polygon:24,Deform:25,Texture:25,Rigging:24,Muscles:25,Characters:31,Constraints:32,Hair Utils:28,Guide Process:38,Guide Brushes:38,Terrain FX:30,Cloud FX:26,Volume:25');
tabs('tabsB', 'Lights and Cameras:47,Collisions:30,Particles:26,Grains:23,Rigid Bodies:34,Particle Fluids:38,Viscous Fluids:39,Fluid Containers:42,Populate Containers:50,Container Tools:43,Pyro FX:23,Cloth:21,Solid:19,Wires:20,Oceans:24,Crowds:24,Drive Simulation:43');
const tools = (id, txt) => $(id).innerHTML = txt.split(',').map(t => { const [n, w, i] = t.split(':'); return `<button class="${n.includes('|') ? 'two' : ''}" style="width:${w}px">${svg(i, 11)}<span>${n.replace('|', '<br>')}</span></button>`; }).join('');
tools('toolsA', 'Box:22:box,Sphere:22:sphere,Tube:22:tube,Torus:22:torus,Grid:22:gridp,Null:21:nul,Line:22:linei,Circle:22:circ,Curve:23:curve,Draw Curve:27:draw,Path:24:path,Spray Paint:27:spray,Font:25:fonti,Platonic|Solids:32:plat,L-System:28:lsys,Metaball:23:meta,File:22:file');
tools('toolsB', 'Camera:20:cam,Point Light:27:sun,Spot Light:28:spot,Area Light:28:area,Geometry|Light:32:geol,Volume Light:35:vol,Distant Light:32:dist,Environment|Light:36:env,Sky Light:24:sky,GI Light:22:gi,Caustic Light:32:caus,Portal Light:31:portal,Ambient Light:35:bulbw,Stereo|Camera:34:stereo,VR Camera:31:vr,Switcher:22:sw');
document.querySelectorAll('[data-tabs]').forEach(e => e.innerHTML = e.dataset.tabs.split(',').map((t, i) => { const [n, w] = t.split(':'); return `<button class="${i ? '' : 'active'}" style="width:${w}px">${n}<i>▾</i></button>`; }).join('') + `<button class="border-0">✚</button><button class="border-0 ms-auto" aria-label="Maximize">${svg('white', 6)}</button><button class="border-0 ps-0">▾</button>`);

// Side bars; * marks a lit button, - a gap
const bar = s => s.split(' ').map(n => n === '-' ? '<div style="height:5px"></div>' : n === '.' ? '<div style="height:1px"></div>' : n === '/' ? '<div class="mt-auto"></div>' : `<button class="${n[0] === '*' ? 'on' : ''}" aria-label="${n.replace('*', '')}">${svg(n.replace('*', ''), 11)}</button>`).join('');
$('barL').innerHTML = '<div class="set d-flex flex-column">' + bar('lamp *hand cube') + '</div>' + bar('- arrow rmove rrot rscale *pose - mgrid mcurve mpoint magnet - cone dial dish / flag ball');
$('barR').innerHTML = bar('*lines ghosts lock pinp moon *bulby loc loc . *mat . link . . dot . . *norm norm2 . num . *prim tris . corner cross . fork sq abc . *disk - . *pinw / info *four disp');
$('play').innerHTML = [1, 2, 3, 4, 5, 6, 7, 8, 9].map(i => `<button class="${i === 5 ? 'on' : ''}" aria-label="Transport ${i}">${svg('p' + i, 11)}</button>`).join('');

// Timeline ruler
let r = '<rect x="0" y="17" width="100%" height="3" fill="#505052"/><rect x="0" y="18" width="10" height="1" fill="#222"/>';
for (let f = 1; f <= 240; f++) { const x = (f - 1) / 239 * 100 + '%', m = f === 1 || f % 30 === 0; r += `<line x1="${x}" x2="${x}" y1="${m ? 4 : 7}" y2="${m ? 11 : 10}" stroke="${m ? '#b5b5b5' : '#858586'}"/>`; if (m && f < 240) r += `<text x="${x}" y="5" dx="1">${f}</text>`; }
const cur = 56 / 239 * 100 + '%';
r += `<svg x="${cur}" y="0" overflow="visible"><path d="M0 10v9" stroke="#111" stroke-width="2"/><rect x="-5" y="0" width="10" height="10" fill="#0c0c0c" stroke="#ccc"/><text x="-3" y="7" style="font-size:6px;fill:#eee">57</text></svg>`;
$('ruler').innerHTML = r;

// Ground grid: two vanishing points on the horizon
const O = [150, 514], VR = [1646, 110], VL = [-343, 110];
const H = (u, v) => { const a = .04 * u, b = -.0437 * v, w = 1 + a + b; return [(O[0] + a * VR[0] + b * VL[0]) / w, (O[1] + a * VR[1] + b * VL[1]) / w]; };
let s = '<defs><linearGradient id="bg" x2="0" y2="1"><stop offset="0" stop-color="#b6b6b6"/><stop offset=".17" stop-color="#abaaad"/><stop offset=".35" stop-color="#a9a8ab"/><stop offset="1" stop-color="#979598"/></linearGradient><linearGradient id="fade" gradientUnits="userSpaceOnUse" x1="0" y1="160" x2="0" y2="420"><stop offset="0" stop-color="#000"/><stop offset="1" stop-color="#fff"/></linearGradient><mask id="m" maskUnits="userSpaceOnUse" x="22" y="103" width="764" height="626"><path d="M22 103h764v626H22z" fill="url(#fade)"/></mask></defs><path d="M22 103h764v626H22z" fill="url(#bg)"/><g mask="url(#m)" stroke="#77767c" stroke-width=".7" opacity=".5">';
const ext = (p, V) => { const k = (800 - V[1]) / (p[1] - V[1]); return `<line x1="${V[0].toFixed(1)}" y1="${V[1]}" x2="${(V[0] + (p[0] - V[0]) * k).toFixed(1)}" y2="800"/>`; };
for (let u = -14; u < 90; u++) s += ext(H(u, 0), VL);
for (let v = -90; v < 20; v++) s += ext(H(0, v), VR);
s += '</g>';

// Cable chain wireframe
let seed = 7; const rnd = () => (seed = (seed * 16807) % 2147483647) / 2147483647;
const mix = (a, b, t) => [a[0] + (b[0] - a[0]) * t, a[1] + (b[1] - a[1]) * t];
const pt = p => p[0].toFixed(1) + ' ' + p[1].toFixed(1);
const poly = (ps, f, o) => `<path d="M${ps.map(pt).join('L')}z" fill="${f}" fill-opacity="${o}" stroke="#1c1c1c" stroke-width=".8"/>`;
const quadLines = (a, b, c, d, n, o) => { let q = ''; for (let i = 0; i < n; i++) { const e = [[a, b], [b, c], [c, d], [d, a]], i1 = Math.floor(rnd() * 4), i2 = (i1 + 1 + Math.floor(rnd() * 3)) % 4; q += 'M' + pt(mix(...e[i1], Math.round(rnd() * 4) / 4)) + 'L' + pt(mix(...e[i2], rnd())); } return `<path d="${q}" fill="none" stroke="#141414" stroke-width=".6" opacity="${o}"/>`; };
const disc = (c, R) => { let q = ''; for (let i = 0; i < 48; i++) { const a = i / 48 * 6.283; q += `M${pt([c[0] + Math.cos(a) * R * .6, c[1] + Math.sin(a) * R * .66])}L${pt([c[0] + Math.cos(a) * R * .9, c[1] + Math.sin(a) * R * 1.03])}`; }
  const el = (k, x) => `<ellipse cx="${c[0]}" cy="${c[1]}" rx="${R * .9 * k}" ry="${R * 1.03 * k}" ${x}/>`;
  return el(1, 'fill="#5c5c5d" fill-opacity=".4" stroke="#333" stroke-width=".6"') + `<path d="${q}" stroke="#222" stroke-width=".5"/>` + el(.6, 'fill="#454546" fill-opacity=".35" stroke="#333" stroke-width=".5"') + el(.36, 'fill="#2a2a2a" fill-opacity=".7" stroke="#161616" stroke-width=".8"') + el(.12, 'fill="#666667"'); };
function run(front, back, r0, r1, top) {
  const n = front.length - 1; let back_ = '', bars = '', plates = '', discs = '';
  for (let i = n - 1; i >= 0; i--) {
    const R = r0 + (r1 - r0) * i / n, up = p => [p[0], p[1] - R * .95];
    const dn = p => [p[0] + 2, p[1] + R * .9];
    const F0 = up(front[i]), F1 = up(front[i + 1]), B0 = back[i], B1 = back[i + 1];
    back_ += poly([B0, B1, F1, F0], '#5c5c5d', top ? .5 : .35) + quadLines(B0, B1, F1, F0, top ? 30 : 22, .85);
    const lip = p => [p[0] + 1, p[1] + 6 - 3 * i / n];
    back_ += poly([B0, B1, lip(B1), lip(B0)], '#333', .6);
    if (!top) back_ += poly([mix(B1, F1, .68), mix(B0, F0, .68), mix(F0, F1, .1), mix(F0, F1, .8)], '#b9b8ba', .65);
    else back_ += poly([mix(B0, B1, .5), mix(B0, B1, .95), mix(mix(B0, F0, .3), mix(B1, F1, .3), .8)], '#a5a4a6', .7);
    const a = mix(B0, B1, .05), b = mix(B0, B1, .38), c = mix(F0, F1, .38), d = mix(F0, F1, .05);
    bars += poly([a, b, c, d], '#5a5a5b', .8) + `<path d="M${pt(a)}L${pt(d)}M${pt(b)}L${pt(c)}" stroke="#111" stroke-width="1.500"/><path d="M${pt(mix(a, b, .5))}L${pt(mix(c, d, .5))}" stroke="#222" stroke-width=".7"/>`;
    plates += poly([F0, F1, dn(front[i + 1]), dn(front[i])], '#535354', .75) + quadLines(F0, F1, dn(front[i + 1]), dn(front[i]), 30, .8);
    if (!top) plates += `<path d="M${pt(mix(F0, F1, .35))}L${pt(mix(F0, F1, .9))}" stroke="#999" stroke-width="2" transform="translate(0 3)"/>`;
    discs += disc(front[i], R);
  }
  return back_ + bars + plates + discs + disc(front[n], r1);
}
const T = [[221,404],[259,394],[294,385],[328,376],[363,368],[395,360],[426,351],[455,344],[483,337],[511,330],[538,324],[563,317],[588,311],[612,304],[631,298]];
const B = [[229,511],[265,501],[300,491],[334,480],[366,469],[398,460],[428,450],[456,441],[484,431],[511,423],[537,414],[561,407],[585,399],[608,392],[630,385],[652,378]];
const TB = T.map((p, i) => mix([186, 364], [575, 279], (p[0] - 221) / 410));
const BB = B.map((p, i) => mix([200, 464], [592, 353], (p[0] - 229) / 423));
// inner face of the bend, then the upper and lower runs
const bendO = [[186,364],[152,378],[130,402],[121,440],[131,470],[148,489],[172,494]];
const bendI = [[221,388],[200,402],[178,422],[165,450],[162,478],[176,498],[190,520]];
const axis = '<path d="M150 514L134 424M150 514l34 28m-2-4l2 4-4 1M150 514l22-6" fill="none" stroke="#d4584e"/>';
s += run(B, BB, 17, 13, false);
for (let i = 0; i < 6; i++) s += poly([bendO[i], bendO[i + 1], bendI[i + 1], bendI[i]], '#6a6a6b', .45) + quadLines(bendO[i], bendO[i + 1], bendI[i + 1], bendI[i], 26, .8);
s += poly([[155,383],[163,377],[200,396],[190,405]], '#666', .9) + poly([[126,424],[136,418],[166,438],[162,448]], '#666', .9);
s += poly([[221,386],[186,408],[166,428],[158,470],[176,508],[196,522],[228,528],[236,500],[205,488],[196,462],[204,440],[235,420]], '#4e4e4f', .7);
s += quadLines([221,386],[235,420],[200,440],[168,425], 50, .8) + quadLines([166,425],[202,440],[196,465],[159,465], 50, .8) + quadLines([160,465],[196,462],[236,500],[200,525], 50, .8);
s += disc([186,428], 20) + disc([176,469], 19) + disc([194,503], 18) + run(T, TB, 17, 12, true) + disc([229,511], 17);
s += '<ellipse cx="653" cy="378" rx="2" ry="4" fill="#bbb" stroke="#222"/>';
s += '<g stroke="#2622c8" stroke-width="2">' + [[223,489],[258,479],[291,469],[323,458],[354,450],[383,441],[412,432],[440,424],[466,416],[491,407],[517,400],[541,391],[564,385],[588,377],[609,369]].map(p => `<path d="M${p[0]} ${p[1] - 4}v6m-1-1v3"/>`).join('') + '</g>' + axis;
s += '<g fill="#8a84a2" font-size="18"><text x="285" y="630" transform="rotate(28 292 627)">5</text><text x="134" y="517" style="font-size:9px" fill="#b08a90">0</text><g opacity=".5" style="font-size:9px"><text x="84" y="449">5</text><text x="33" y="405">10</text><text x="706" y="343">5</text></g></g>';
s += '<g fill="none"><path d="M33 719v-9" stroke="#333"/><path d="M33 709v-3" stroke="#5ac04a" stroke-width="2"/><path d="M33 718l7 1" stroke="#2a3fae" stroke-width="2"/><path d="M38 716l5-2" stroke="#c8453c"/></g>';
$('scene').innerHTML = s;
</script>
</body>
</html>
